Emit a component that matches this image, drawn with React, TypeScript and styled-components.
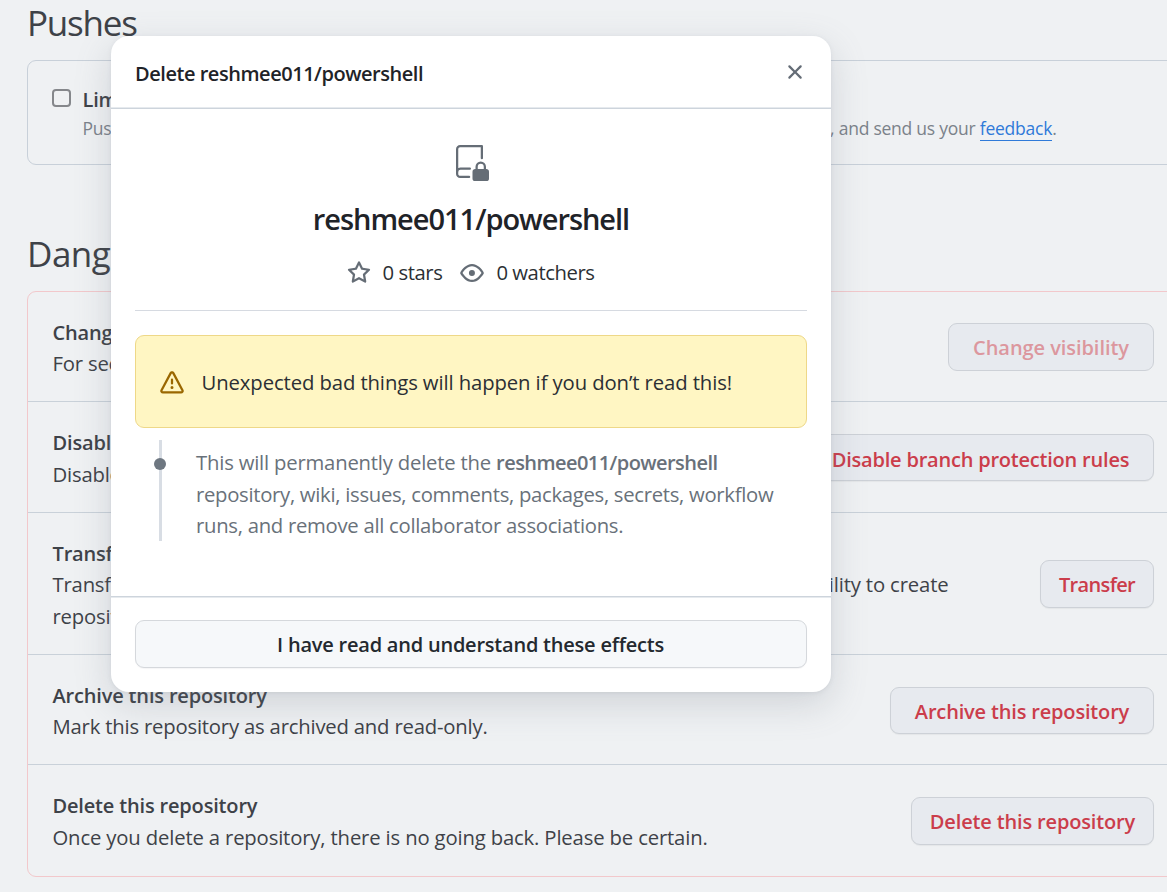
import React from 'react';
import styled, { createGlobalStyle } from 'styled-components';
import { GoRepoLocked } from 'react-icons/go';

const GlobalStyle = createGlobalStyle`
  * { box-sizing: border-box; }
  body {
    margin: 0;
    background: #eff1f3;
    color: #3e4248;
    font: 400 20.3px/31.5px 'Open Sans', 'Noto Sans', sans-serif;
    overflow: hidden;
  }
`;

const Page = styled.div`
  position: relative;
  width: 1167px;
  height: 892px;
  overflow: hidden;
`;

const Settings = styled.main`
  width: 1151px;
  margin-left: 27px;
`;

const Heading = styled.h2<{ $top: number; $track: number }>`
  margin: 0;
  padding-top: ${(p) => p.$top}px;
  margin-bottom: 15px;
  font-size: 35px;
  font-weight: 400;
  line-height: 44px;
  letter-spacing: ${(p) => p.$track}px;
`;

const PushBox = styled.section`
  display: flex;
  height: 105px;
  padding: 22px 24px;
  border: 1px solid #c8d0d9;
  border-radius: 9px;
`;

const Checkbox = styled.span`
  flex: none;
  width: 19px;
  height: 18px;
  margin: 6px 11.5px 0 0;
  border: 2px solid #85878b;
  border-radius: 4px;
`;

const PushText = styled.div`
  display: flex;
  flex-direction: column;
  flex: 1;
  padding-top: 1px;
`;

const Strong = styled.strong<{ $track?: number }>`
  font-size: 20px;
  font-weight: 600;
  letter-spacing: ${(p) => p.$track ?? 0}px;
  white-space: nowrap;
`;

const Note = styled.div`
  display: flex;
  justify-content: space-between;
  margin: -1px 96.5px 0 0;
  color: #7b828a;
  font-size: 17.5px;
  letter-spacing: -0.24px;
  line-height: 27px;
`;

const Link = styled.a`
  color: #2f7ad9;
  border-bottom: 1px solid #2f7ad9;
`;

const DangerBox = styled.section`
  border: 1px solid #f2c8cb;
  border-radius: 9px;
`;

const DangerRow = styled.div<{ $height: number }>`
  display: flex;
  align-items: center;
  justify-content: space-between;
  height: ${(p) => p.$height}px;
  padding: 0 23px 0 24.5px;

  & + & {
    border-top: 1px solid #c9d1d9;
  }
`;

const RowText = styled.div<{ $top: number }>`
  display: flex;
  flex-direction: column;
  padding-top: ${(p) => p.$top}px;
`;

const Line = styled.span<{ $track?: number }>`
  letter-spacing: ${(p) => p.$track ?? -0.2}px;
  white-space: nowrap;
`;

const Tail = styled.span`
  align-self: center;
  margin: 2px 91.5px 0 auto;
  letter-spacing: -0.15px;
  white-space: nowrap;
`;

const DangerButton = styled.button<{ $width: number; $top?: number; $muted?: boolean; $track: number }>`
  flex: none;
  width: ${(p) => p.$width}px;
  height: ${(p) => (p.$top ? 47 : 48)}px;
  margin-top: ${(p) => (p.$top ? 1 : 0)}px;
  padding: ${(p) => p.$top ?? 2}px 0 0;
  border: 1px solid #cdd1d7;
  border-radius: 9px;
  background: #e7eaef;
  box-shadow: ${(p) => (p.$muted ? 'none' : '0 1px 1px rgba(31, 35, 40, 0.05)')};
  color: ${(p) => (p.$muted ? '#dc979e' : '#cb3d4b')};
  font: inherit;
  font-size: 20px;
  font-weight: 600;
  letter-spacing: ${(p) => p.$track}px;
  white-space: nowrap;
`;

const Dialog = styled.div`
  position: absolute;
  top: 36px;
  left: 111px;
  display: flex;
  flex-direction: column;
  width: 720px;
  height: 656px;
  border-radius: 18px;
  background: #fff;
  color: #1f2328;
  box-shadow: 0 12px 36px rgba(110, 118, 129, 0.24), 0 1px 4px rgba(110, 118, 129, 0.12);
`;

const DialogHeader = styled.header`
  display: flex;
  align-items: center;
  justify-content: space-between;
  height: 73px;
  padding: 3px 24px 0;
  border-bottom: 1px solid #cdd4dc;
  box-shadow: inset 0 -1px #e6eaee;
`;

const CloseButton = styled.button`
  display: flex;
  margin-top: -3px;
  padding: 0;
  border: 0;
  background: none;
  color: #646c76;
`;

const Glyph = styled.svg`
  display: block;
  flex: none;
  fill: currentColor;
`;

const DialogBody = styled.div`
  flex: 1;
  padding: 0 24px;
`;

const Summary = styled.div`
  display: flex;
  flex-direction: column;
  align-items: center;
  height: 202px;
  padding-top: 36px;
  border-bottom: 1px solid #d6dae1;
  color: #656d76;
`;

const RepoName = styled.h1`
  margin: 15px 0 0;
  color: #1f2328;
  font-size: 29px;
  font-weight: 600;
  line-height: 45px;
  letter-spacing: -1.03px;
  white-space: nowrap;
`;

const Stats = styled.div`
  display: flex;
  align-items: center;
  gap: 18px;
  margin: 16px 1px 0 0;
`;

const Stat = styled.span`
  display: flex;
  align-items: center;
  gap: 12px;
  letter-spacing: -0.45px;

  span {
    color: #2b2f34;
  }
`;

const Warning = styled.div`
  display: flex;
  align-items: center;
  gap: 17.5px;
  height: 93px;
  margin-top: 24px;
  padding: 2px 0 0 24px;
  border: 1px solid #eed888;
  border-radius: 9px;
  background: #fff6c3;
  color: #9a6700;

  span {
    color: #2b2f34;
  }
`;

const Timeline = styled.div`
  display: flex;
  height: 101px;
  margin: 12px 0 0 24px;
  color: #69717a;
`;

const Rail = styled.div`
  position: relative;
  flex: none;
  width: 3px;
  margin-right: 34px;
  background: #d8dde4;

  &::before {
    content: '';
    position: absolute;
    top: 18px;
    left: -5px;
    width: 12px;
    height: 12px;
    border-radius: 50%;
    background: #6e7781;
  }
`;

const Effects = styled.div`
  display: flex;
  flex-direction: column;
  padding-top: 7px;
`;

const DialogFooter = styled.footer`
  height: 96px;
  padding: 23px 24px;
  border-top: 1px solid #cdd4dc;
  box-shadow: inset 0 1px #e6eaee;
`;

const ConfirmButton = styled.button`
  width: 100%;
  height: 48px;
  padding: 2px 1px 0 0;
  border: 1px solid #d5d8dc;
  border-radius: 9px;
  background: #f6f8fa;
  box-shadow: 0 1px 1px rgba(31, 35, 40, 0.04);
  color: #24292f;
  font: inherit;
  font-size: 20px;
  font-weight: 600;
  letter-spacing: -0.22px;
`;

const paths = {
  x: 'M3.72 3.72a.75.75 0 0 1 1.06 0L8 6.94l3.22-3.22a.749.749 0 0 1 1.275.326.749.749 0 0 1-.215.734L9.06 8l3.22 3.22a.749.749 0 0 1-.326 1.275.749.749 0 0 1-.734-.215L8 9.06l-3.22 3.22a.751.751 0 0 1-1.042-.018.751.751 0 0 1-.018-1.042L6.94 8 3.72 4.78a.75.75 0 0 1 0-1.06Z',
  star: 'M8 .25a.75.75 0 0 1 .673.418l1.882 3.815 4.21.612a.75.75 0 0 1 .416 1.279l-3.046 2.97.719 4.192a.751.751 0 0 1-1.088.791L8 12.347l-3.766 1.98a.75.75 0 0 1-1.088-.79l.72-4.194L.818 6.374a.75.75 0 0 1 .416-1.28l4.21-.611L7.327.668A.75.75 0 0 1 8 .25Zm0 2.445L6.615 5.5a.75.75 0 0 1-.564.41l-3.097.45 2.24 2.184a.75.75 0 0 1 .216.664l-.528 3.084 2.769-1.456a.75.75 0 0 1 .698 0l2.77 1.456-.53-3.084a.75.75 0 0 1 .216-.664l2.24-2.183-3.096-.45a.75.75 0 0 1-.564-.41L8 2.694Z',
  eye: 'M8 2c1.981 0 3.671.992 4.933 2.078 1.27 1.091 2.187 2.345 2.637 3.023a1.62 1.62 0 0 1 0 1.798c-.45.678-1.367 1.932-2.637 3.023C11.67 13.008 9.981 14 8 14c-1.981 0-3.671-.992-4.933-2.078C1.797 10.83.88 9.576.43 8.898a1.62 1.62 0 0 1 0-1.798c.45-.677 1.367-1.931 2.637-3.022C4.33 2.992 6.019 2 8 2ZM1.679 7.932a.12.12 0 0 0 0 .136c.411.622 1.241 1.75 2.366 2.717C5.176 11.758 6.527 12.5 8 12.5c1.473 0 2.825-.742 3.955-1.715 1.124-.967 1.954-2.096 2.366-2.717a.12.12 0 0 0 0-.136c-.412-.621-1.242-1.75-2.366-2.717C10.824 4.242 9.473 3.5 8 3.5c-1.473 0-2.825.742-3.955 1.715-1.124.967-1.954 2.096-2.366 2.717ZM8 10a2 2 0 1 1-.001-3.999A2 2 0 0 1 8 10Z',
  alert: 'M6.457 1.047c.659-1.234 2.427-1.234 3.086 0l6.082 11.378A1.75 1.75 0 0 1 14.082 15H1.918a1.75 1.75 0 0 1-1.543-2.575Zm1.763.707a.25.25 0 0 0-.44 0L1.698 13.132a.25.25 0 0 0 .22.368h12.164a.25.25 0 0 0 .22-.368Zm.53 3.996v2.5a.75.75 0 0 1-1.5 0v-2.5a.75.75 0 0 1 1.5 0ZM9 11a1 1 0 1 1-2 0 1 1 0 0 1 2 0Z',
};

const Icon = ({ name }: { name: keyof typeof paths }) => (
  <Glyph viewBox="0 0 16 16" width="24" height="24" aria-hidden="true">
    <path d={paths[name]} />
  </Glyph>
);

type Row = {
  title: string;
  lines: string[];
  lineTrack?: number;
  textTop: number;
  tail?: string;
  action: string;
  width: number;
  track: number;
  height: number;
  muted?: boolean;
  buttonTop?: number;
};

const rows: Row[] = [
  { title: 'Change', lines: ['For security'], textTop: 3, action: 'Change visibility', width: 206, track: -0.06, height: 109, muted: true },
  { title: 'Disable', lines: ['Disable'], textTop: 3, action: 'Disable branch protection rules', width: 347, track: -0.21, height: 111, buttonTop: 4 },
  { title: 'Transfer', lines: ['Transfer', 'repositories'], textTop: 3, tail: 'ility to create', action: 'Transfer', width: 114, track: -0.65, height: 142 },
  { title: 'Archive this repository', lines: ['Mark this repository as archived and read-only.'], textTop: 3, action: 'Archive this repository', width: 264, track: -0.17, height: 110, buttonTop: 3 },
  { title: 'Delete this repository', lines: ['Once you delete a repository, there is no going back. Please be certain.'], lineTrack: -0.16, textTop: 2, action: 'Delete this repository', width: 243, track: -0.15, height: 112 },
];

export default function App() {
  return (
    <Page>
      <GlobalStyle />
      <Settings>
        <Heading $top={1} $track={-1.2}>Pushes</Heading>
        <PushBox>
          <Checkbox />
          <PushText>
            <Strong $track={-0.2}>Limit</Strong>
            <Note>
              <span>Pushes</span>
              <span>, and send us your <Link>feedback</Link>.</span>
            </Note>
          </PushText>
        </PushBox>
        <Heading $top={67} $track={-0.5}>Danger</Heading>
        <DangerBox>
          {rows.map((row) => (
            <DangerRow key={row.action} $height={row.height}>
              <RowText $top={row.textTop}>
                <Strong $track={-0.17}>{row.title}</Strong>
                {row.lines.map((line) => <Line key={line} $track={row.lineTrack}>{line}</Line>)}
              </RowText>
              {row.tail && <Tail>{row.tail}</Tail>}
              <DangerButton $width={row.width} $track={row.track} $muted={row.muted} $top={row.buttonTop}>
                {row.action}
              </DangerButton>
            </DangerRow>
          ))}
        </DangerBox>
      </Settings>

      <Dialog role="dialog">
        <DialogHeader>
          <Strong $track={-0.46}>Delete reshmee011/powershell</Strong>
          <CloseButton aria-label="Close"><Icon name="x" /></CloseButton>
        </DialogHeader>
        <DialogBody>
          <Summary>
            <GoRepoLocked size={36} />
            <RepoName>reshmee011/powershell</RepoName>
            <Stats>
              <Stat><Icon name="star" /><span>0 stars</span></Stat>
              <Stat><Icon name="eye" /><span>0 watchers</span></Stat>
            </Stats>
          </Summary>
          <Warning>
            <Icon name="alert" />
            <Line $track={-0.1}>Unexpected bad things will happen if you don’t read this!</Line>
          </Warning>
          <Timeline>
            <Rail />
            <Effects>
              <Line>This will permanently delete the <Strong $track={-0.56}>reshmee011/powershell</Strong></Line>
              <Line $track={-0.3}>repository, wiki, issues, comments, packages, secrets, workflow</Line>
              <Line $track={-0.28}>runs, and remove all collaborator associations.</Line>
            </Effects>
          </Timeline>
        </DialogBody>
        <DialogFooter>
          <ConfirmButton>I have read and understand these effects</ConfirmButton>
        </DialogFooter>
      </Dialog>
    </Page>
  );
}
